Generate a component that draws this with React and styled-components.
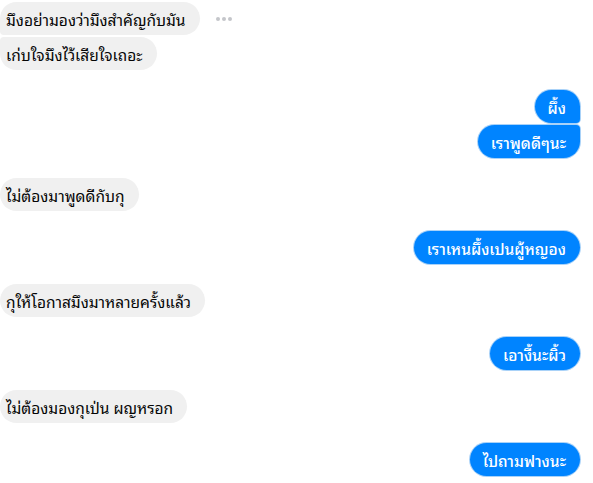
import React from 'react';
import styled, { createGlobalStyle } from 'styled-components';

const MESSAGES = [
  { id: 1, mine: false, pos: 'first', text: 'มึงอย่ามองว่ามึงสำคัญกับมัน', more: true },
  { id: 2, mine: false, pos: 'last', text: 'เก่บใจมึงไว้เสียใจเถอะ' },
  { id: 3, mine: true, pos: 'first', text: 'ผึ้ง', gapTop: true },
  { id: 4, mine: true, pos: 'last', text: 'เราพูดดีๆนะ' },
  { id: 5, mine: false, pos: 'single', text: 'ไม่ต้องมาพูดดีกับกุ', gapTop: true },
  { id: 6, mine: true, pos: 'single', text: 'เราเหนผึ้งเปนผู้หญอง', gapTop: true },
  { id: 7, mine: false, pos: 'single', text: 'กุให้โอกาสมึงมาหลายครั้งแล้ว', gapTop: true },
  { id: 8, mine: true, pos: 'single', text: 'เอางี้นะผิ้ว', gapTop: true },
  { id: 9, mine: false, pos: 'single', text: 'ไม่ต้องมองกุเป่น ผญหรอก', gapTop: true },
  { id: 10, mine: true, pos: 'single', text: 'ไปถามฟางนะ', gapTop: true },
];

const radius = (mine, pos) => {
  if (mine) {
    if (pos === 'first') return '17px 17px 4px 17px';
    if (pos === 'last') return '17px 4px 17px 17px';
    return '17px';
  }
  if (pos === 'first') return '17px 17px 17px 4px';
  if (pos === 'last') return '4px 17px 17px 17px';
  return '17px';
};

const App = () => {
  return (
    <>
      <GlobalStyle />
      <Thread>
        {MESSAGES.map(msg => (
          <Row key={msg.id} mine={msg.mine} gapTop={msg.gapTop}>
            <Bubble mine={msg.mine} shape={radius(msg.mine, msg.pos)}>
              {msg.text}
            </Bubble>
            {msg.more && (
              <More>
                <Dot />
                <Dot />
                <Dot />
              </More>
            )}
          </Row>
        ))}
      </Thread>
    </>
  );
};

export default App;

const GlobalStyle = createGlobalStyle`
  body {
    margin: 0;
    background: #ffffff;
    font-family: "Noto Sans Thai Looped", "Noto Sans Thai", "Noto Sans", sans-serif;
  }
`;

const Thread = styled.div`
  display: flex;
  flex-direction: column;
  width: 593px;
  padding: 2px 13px 8px 0;
  box-sizing: border-box;
`;

const Row = styled.div.withConfig({
  shouldForwardProp: p => !['mine', 'gapTop'].includes(p),
})`
  display: flex;
  align-items: center;
  justify-content: ${p => (p.mine ? 'flex-end' : 'flex-start')};
  margin-top: ${p => (p.gapTop ? '20px' : '2px')};
  &:first-child {
    margin-top: 0;
  }
`;

const Bubble = styled.div.withConfig({
  shouldForwardProp: p => !['mine', 'shape'].includes(p),
})`
  box-sizing: border-box;
  height: 33px;
  display: flex;
  align-items: center;
  padding: 0 14px 0 ${p => (p.mine ? '13px' : '6px')};
  border-radius: ${p => p.shape};
  background: ${p => (p.mine ? '#0084ff' : '#f0f0f0')};
  color: ${p => (p.mine ? '#ffffff' : '#050505')};
  font-size: 15.5px;
  font-weight: ${p => (p.mine ? 500 : 400)};
  white-space: nowrap;
  ${p => p.mine && 'box-shadow: 0 0 0 1px #a9d2f8;'}
`;

const More = styled.div`
  display: flex;
  gap: 2px;
  margin-left: 16px;
`;

const Dot = styled.span`
  width: 4px;
  height: 4px;
  border-radius: 50%;
  background: #c4c6ca;
`;
